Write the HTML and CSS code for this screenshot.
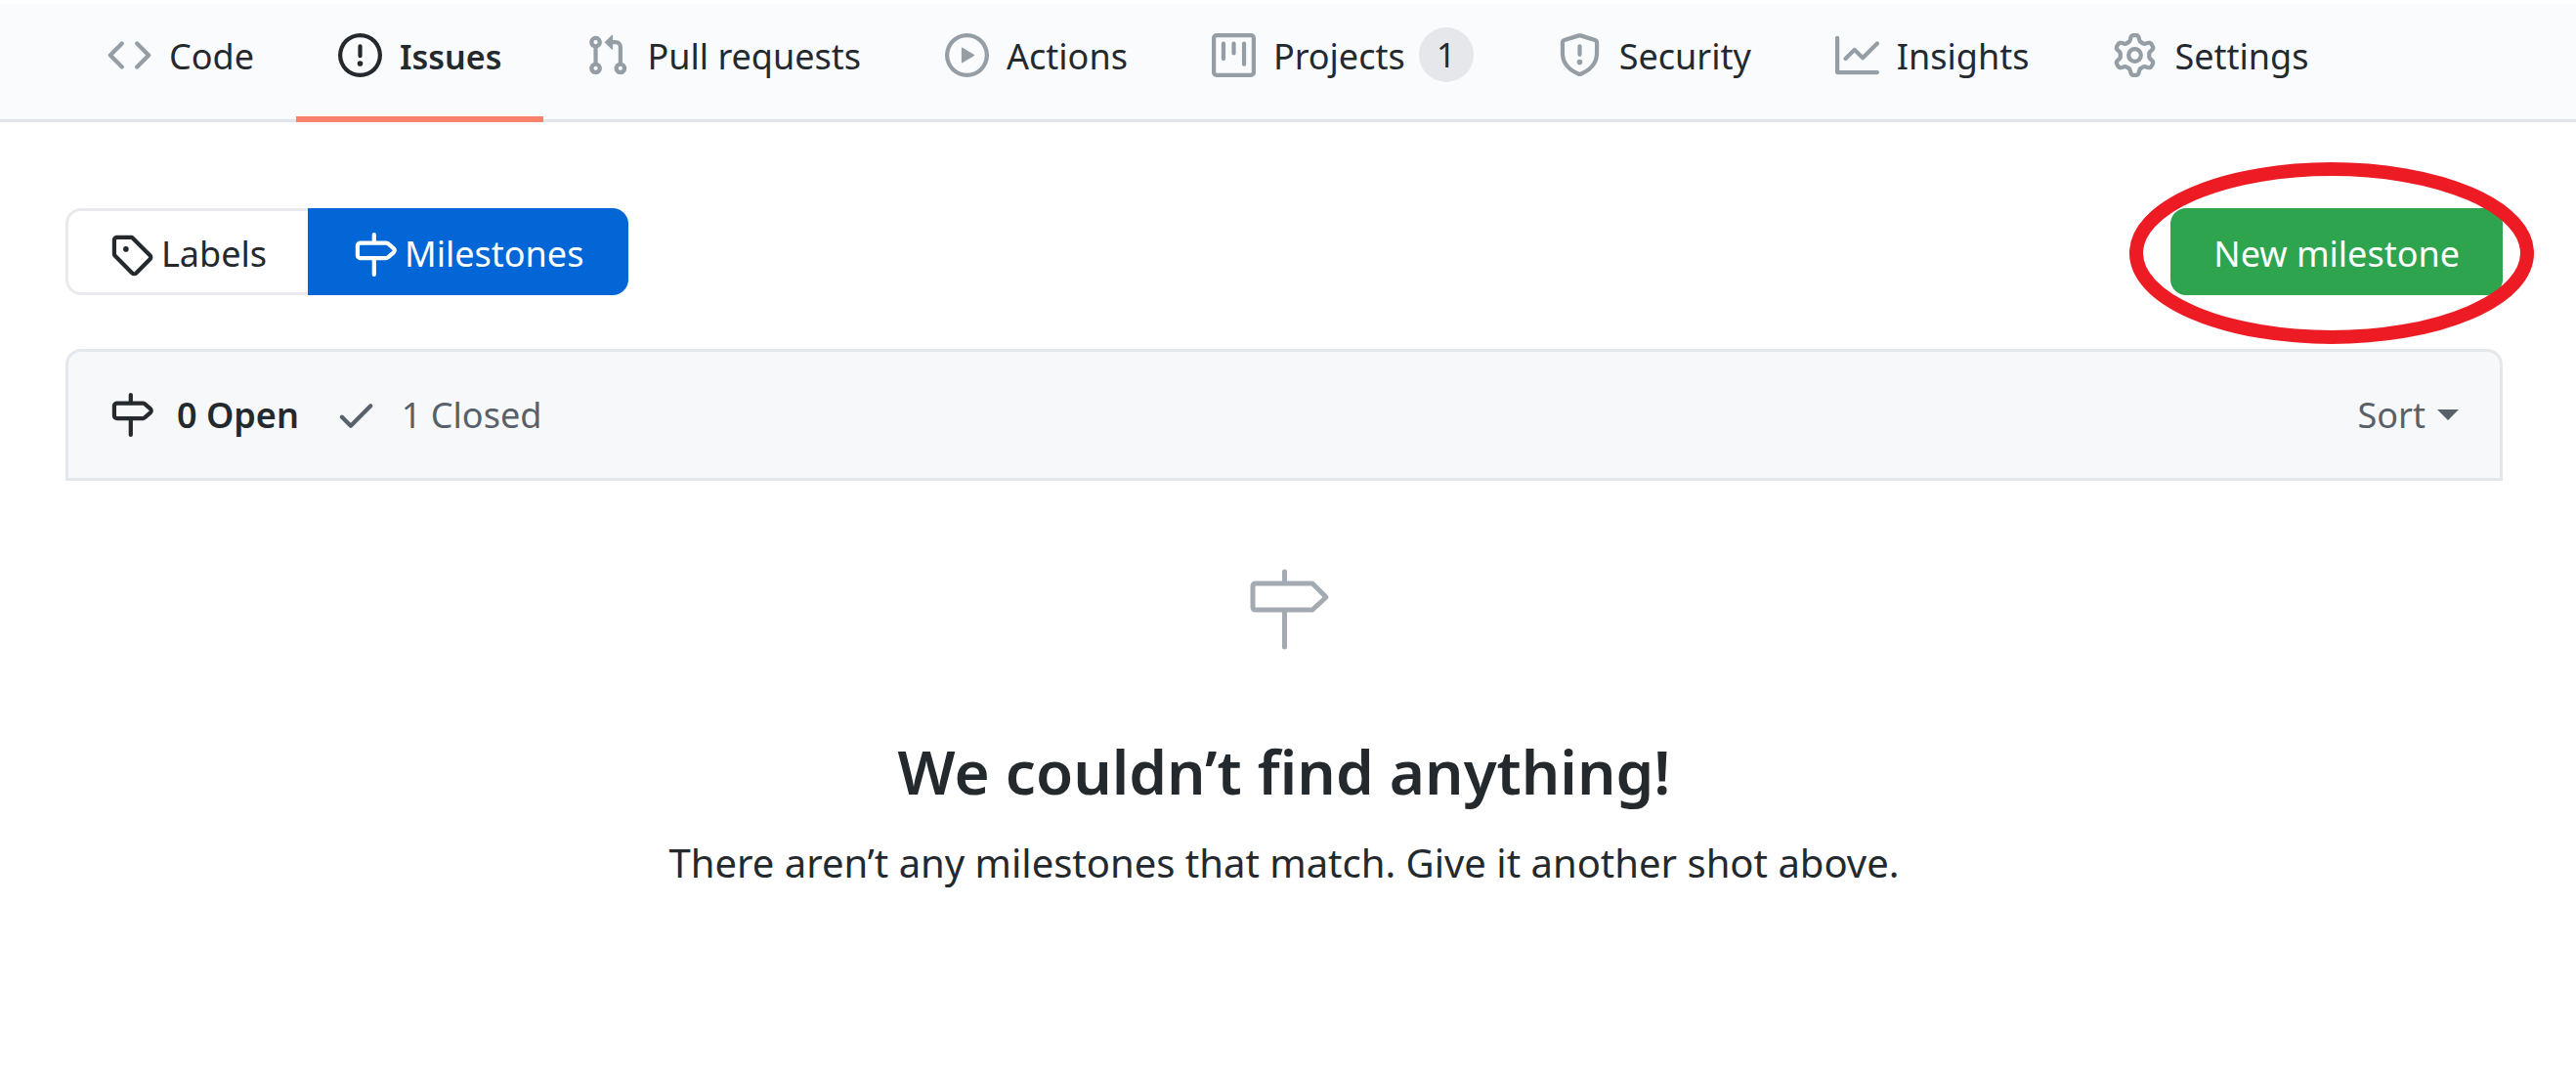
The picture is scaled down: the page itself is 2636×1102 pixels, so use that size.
FILE: index.html
```html
<!DOCTYPE html>
<html lang="en">
<head>
<meta charset="utf-8">
<title>Milestones</title>
<link rel="stylesheet" href="styles.css">
</head>
<body>
<svg class="sprite" aria-hidden="true">
  <symbol id="milestone" viewBox="0 0 16 16"><path d="M7.75 0a.75.75 0 01.75.75V3h3.634c.414 0 .814.147 1.13.414l2.07 1.75a1.75 1.75 0 010 2.672l-2.07 1.75a1.75 1.75 0 01-1.13.414H8.5v5.25a.75.75 0 11-1.5 0V10H2.75A1.75 1.75 0 011 8.25v-3.5C1 3.784 1.784 3 2.75 3H7V.75A.75.75 0 017.75 0zm0 8.5h4.384a.25.25 0 00.161-.06l2.07-1.75a.25.25 0 000-.38l-2.07-1.75a.25.25 0 00-.161-.06H2.75a.25.25 0 00-.25.25v3.5c0 .138.112.25.25.25h5z"/></symbol>
</svg>
<nav class="tabs" aria-label="Repository">
  <a class="tab" href="#code"><svg class="icon" viewBox="0 0 16 16"><path d="M4.72 3.22a.75.75 0 011.06 1.06L2.06 8l3.72 3.72a.75.75 0 11-1.06 1.06L.47 8.53a.75.75 0 010-1.06l4.25-4.25zm6.56 0a.75.75 0 10-1.06 1.06L13.94 8l-3.72 3.72a.75.75 0 101.06 1.06l4.25-4.25a.75.75 0 000-1.06l-4.25-4.25z"/></svg><span class="label">Code</span></a>
  <a class="tab tab-current" href="#issues" aria-current="page"><svg class="icon" viewBox="0 0 16 16"><path fill-rule="evenodd" d="M8 1.5a6.5 6.5 0 100 13 6.5 6.5 0 000-13zM0 8a8 8 0 1116 0A8 8 0 010 8zm9 3a1 1 0 11-2 0 1 1 0 012 0zm-.25-6.25a.75.75 0 00-1.5 0v3.5a.75.75 0 001.5 0v-3.5z"/></svg><span class="label">Issues</span></a>
  <a class="tab" href="#pulls"><svg class="icon" viewBox="0 0 16 16"><path fill-rule="evenodd" d="M7.177 3.073L9.573.677A.25.25 0 0110 .854v4.792a.25.25 0 01-.427.177L7.177 3.427a.25.25 0 010-.354zM3.75 2.5a.75.75 0 100 1.5.75.75 0 000-1.5zm-2.25.75a2.25 2.25 0 113 2.122v5.256a2.251 2.251 0 11-1.5 0V5.372A2.25 2.25 0 011.5 3.25zM11 2.5h-1V4h1a1 1 0 011 1v5.628a2.251 2.251 0 101.5 0V5A2.5 2.5 0 0011 2.5zm1 10.25a.75.75 0 111.5 0 .75.75 0 01-1.5 0zM3.75 12a.75.75 0 100 1.5.75.75 0 000-1.5z"/></svg><span class="label">Pull requests</span></a>
  <a class="tab" href="#actions"><svg class="icon" viewBox="0 0 16 16"><path fill-rule="evenodd" d="M1.5 8a6.5 6.5 0 1113 0 6.5 6.5 0 01-13 0zM8 0a8 8 0 100 16A8 8 0 008 0zM6.379 5.227A.25.25 0 006 5.442v5.117a.25.25 0 00.379.214l4.264-2.559a.25.25 0 000-.428L6.379 5.227z"/></svg><span class="label">Actions</span></a>
  <a class="tab" href="#projects"><svg class="icon" viewBox="0 0 16 16"><path fill-rule="evenodd" d="M1.75 0A1.75 1.75 0 000 1.75v12.5C0 15.216.784 16 1.75 16h12.5A1.75 1.75 0 0016 14.25V1.75A1.75 1.75 0 0014.25 0H1.75zM1.5 1.75a.25.25 0 01.25-.25h12.5a.25.25 0 01.25.25v12.5a.25.25 0 01-.25.25H1.75a.25.25 0 01-.25-.25V1.75zM11.75 3a.75.75 0 00-.75.75v7.5a.75.75 0 001.5 0v-7.5a.75.75 0 00-.75-.75zm-8.25.75a.75.75 0 011.5 0v5.5a.75.75 0 01-1.5 0v-5.5zM8 3a.75.75 0 00-.75.75v3.5a.75.75 0 001.5 0v-3.5A.75.75 0 008 3z"/></svg><span class="label">Projects</span><span class="count">1</span></a>
  <a class="tab" href="#security"><svg class="icon" viewBox="0 0 16 16"><path fill-rule="evenodd" d="M7.467.133a1.75 1.75 0 011.066 0l5.25 1.68A1.75 1.75 0 0115 3.48V7c0 1.566-.32 3.182-1.303 4.682-.983 1.498-2.585 2.813-5.032 3.855a1.7 1.7 0 01-1.33 0c-2.447-1.042-4.049-2.357-5.032-3.855C1.32 10.182 1 8.566 1 7V3.48a1.75 1.75 0 011.217-1.667l5.25-1.68zm.61 1.429a.25.25 0 00-.153 0l-5.25 1.68a.25.25 0 00-.174.238V7c0 1.358.275 2.666 1.057 3.86.784 1.194 2.121 2.34 4.366 3.297a.2.2 0 00.154 0c2.245-.956 3.582-2.104 4.366-3.298C13.225 9.666 13.5 8.36 13.5 7V3.48a.25.25 0 00-.174-.237l-5.25-1.68zM9 10.5a1 1 0 11-2 0 1 1 0 012 0zm-.25-5.75a.75.75 0 10-1.5 0v3a.75.75 0 001.5 0v-3z"/></svg><span class="label">Security</span></a>
  <a class="tab" href="#insights"><svg class="icon" viewBox="0 0 16 16"><path fill-rule="evenodd" d="M1.5 1.75a.75.75 0 00-1.5 0v12.5c0 .414.336.75.75.75h14.5a.75.75 0 000-1.5H1.5V1.75zm14.28 2.53a.75.75 0 00-1.06-1.06L10 7.94 7.53 5.47a.75.75 0 00-1.06 0L3.22 8.72a.75.75 0 001.06 1.06L7 7.06l2.47 2.47a.75.75 0 001.06 0l5.25-5.25z"/></svg><span class="label">Insights</span></a>
  <a class="tab" href="#settings"><svg class="icon" viewBox="0 0 16 16"><path fill-rule="evenodd" d="M7.429 1.525a6.593 6.593 0 011.142 0c.036.003.108.036.137.146l.289 1.105c.147.56.55.967.997 1.189.174.086.341.183.501.29.417.278.97.423 1.53.27l1.102-.303c.11-.03.175.016.195.046.219.31.41.641.573.989.014.031.022.11-.059.19l-.815.806c-.411.406-.562.957-.53 1.456a4.588 4.588 0 010 .582c-.032.499.119 1.05.53 1.456l.815.806c.08.08.073.159.059.19a6.494 6.494 0 01-.573.99c-.02.029-.086.074-.195.045l-1.103-.303c-.559-.153-1.112-.008-1.529.27-.16.107-.327.204-.5.29-.449.222-.851.628-.998 1.189l-.289 1.105c-.029.11-.101.143-.137.146a6.613 6.613 0 01-1.142 0c-.036-.003-.108-.037-.137-.146l-.289-1.105c-.147-.56-.55-.967-.997-1.189a4.502 4.502 0 01-.501-.29c-.417-.278-.97-.423-1.53-.27l-1.102.303c-.11.03-.175-.016-.195-.046a6.492 6.492 0 01-.573-.989c-.014-.031-.022-.11.059-.19l.815-.806c.411-.406.562-.957.53-1.456a4.587 4.587 0 010-.582c.032-.499-.119-1.05-.53-1.456l-.815-.806c-.08-.08-.073-.159-.059-.19a6.44 6.44 0 01.573-.99c.02-.029.086-.075.195-.045l1.103.303c.559.153 1.112.008 1.529-.27.16-.107.327-.204.5-.29.449-.222.851-.628.998-1.189l.289-1.105c.029-.11.101-.143.137-.146zM8 0c-.236 0-.47.01-.701.03-.743.065-1.29.615-1.458 1.261l-.29 1.106c-.017.066-.078.158-.211.224a5.994 5.994 0 00-.668.386c-.123.082-.233.09-.3.071L3.27 2.776c-.644-.177-1.392.02-1.82.63a7.977 7.977 0 00-.704 1.217c-.315.675-.111 1.422.363 1.891l.815.806c.05.048.098.147.088.294a6.084 6.084 0 000 .772c.01.147-.038.246-.088.294l-.815.806c-.474.469-.678 1.216-.363 1.891.2.428.436.835.704 1.218.428.609 1.176.806 1.82.63l1.103-.303c.066-.019.176-.011.299.071.213.143.436.272.668.386.133.066.194.158.212.224l.289 1.106c.169.646.715 1.196 1.458 1.26a8.094 8.094 0 001.402 0c.743-.064 1.29-.614 1.458-1.26l.29-1.106c.017-.066.078-.158.211-.224a5.98 5.98 0 00.668-.386c.123-.082.233-.09.3-.071l1.102.302c.644.177 1.392-.02 1.82-.63.268-.382.505-.789.704-1.217.315-.675.111-1.422-.364-1.891l-.814-.806c-.05-.048-.098-.147-.088-.294a6.1 6.1 0 000-.772c-.01-.147.039-.246.088-.294l.814-.806c.475-.469.679-1.216.364-1.891a7.992 7.992 0 00-.704-1.218c-.428-.609-1.176-.806-1.82-.63l-1.103.303c-.066.019-.176.011-.299-.071a5.991 5.991 0 00-.668-.386c-.133-.066-.194-.158-.212-.224L10.16 1.29C9.99.645 9.444.095 8.701.031A8.094 8.094 0 008 0zm1.5 8a1.5 1.5 0 11-3 0 1.5 1.5 0 013 0zM11 8a3 3 0 11-6 0 3 3 0 016 0z"/></svg><span class="label">Settings</span></a>
</nav>
<main class="page">
  <div class="toolbar">
    <div class="subnav">
      <a class="subnav-item" href="#labels"><svg class="icon icon-low" viewBox="0 0 16 16"><path fill-rule="evenodd" d="M2.5 7.775V2.75a.25.25 0 01.25-.25h5.025a.25.25 0 01.177.073l6.25 6.25a.25.25 0 010 .354l-5.025 5.025a.25.25 0 01-.354 0l-6.25-6.25a.25.25 0 01-.073-.177zm-1.5 0V2.75C1 1.784 1.784 1 2.75 1h5.025c.464 0 .91.184 1.238.513l6.25 6.25a1.75 1.75 0 010 2.474l-5.026 5.026a1.75 1.75 0 01-2.474 0l-6.25-6.25A1.75 1.75 0 011 7.775zM6 5a1 1 0 100 2 1 1 0 000-2z"/></svg><span class="label">Labels</span></a>
      <a class="subnav-item subnav-current" href="#milestones" aria-current="page"><svg class="icon icon-low"><use href="#milestone"/></svg><span class="label">Milestones</span></a>
    </div>
    <div class="create">
      <button class="create-button" type="button">New milestone</button>
      <svg class="highlight" viewBox="0 0 414 188" aria-hidden="true"><ellipse cx="207" cy="94" rx="200" ry="86"/></svg>
    </div>
  </div>
  <div class="list-header">
    <a class="filter filter-current" href="#open"><svg class="icon"><use href="#milestone"/></svg><span>0 Open</span></a>
    <a class="filter" href="#closed"><svg class="icon" viewBox="0 0 16 16"><path d="M13.78 4.22a.75.75 0 010 1.06l-7.25 7.25a.75.75 0 01-1.06 0L2.22 9.28a.75.75 0 011.06-1.06L6 10.94l6.72-6.72a.75.75 0 011.06 0z"/></svg><span>1 Closed</span></a>
    <button class="sort" type="button">Sort<span class="caret"></span></button>
  </div>
  <section class="blank">
    <svg class="blank-icon" viewBox="0 0 87 87" aria-hidden="true"><path d="M43.5 5v12M43.5 44v38M14 17h58l14 14-14 13H14q-3 0-3-3V20q0-3 3-3z"/></svg>
    <h1 class="blank-title">We couldn’t find anything!</h1>
    <p class="blank-text">There aren’t any milestones that match. Give it another shot above.</p>
  </section>
</main>
</body>
</html>
```
FILE: styles.css
```css
* { box-sizing: border-box; }

body {
  margin: 0;
  background: #fff;
  color: #24292e;
  font-family: "Noto Sans", "Open Sans", sans-serif;
  font-size: 36px;
  line-height: 56px;
}

a { color: inherit; text-decoration: none; }
button { font: inherit; border: 0; cursor: pointer; }
.sprite { position: absolute; width: 0; height: 0; }
.icon { flex: none; width: 45px; height: 45px; fill: currentColor; }
.label { padding-top: 4px; }

.tabs {
  display: flex;
  margin-top: 4px;
  padding-left: 67px;
  background: #fafbfd;
  border-bottom: 3px solid #e1e4e8;
}
.tab {
  display: flex;
  align-items: center;
  gap: 18px;
  margin-bottom: -3px;
  padding: 22px 43px 33px;
  border-bottom: 6px solid transparent;
  white-space: nowrap;
}
.tab .icon { color: #959da5; }
.tab-current { border-bottom-color: #f9826c; font-size: 34px; font-weight: 600; }
.tab-current .icon { color: #24292e; }
.count {
  width: 56px;
  height: 56px;
  margin-left: -4px;
  border-radius: 50%;
  background: #e6e7ea;
  font-size: 34px;
  text-align: center;
}

.page { padding: 88px 75px 0 67px; }
.toolbar { display: flex; justify-content: space-between; }
.subnav { display: flex; }
.subnav-item {
  display: flex;
  align-items: center;
  gap: 8px;
  height: 89px;
  padding: 0 42px;
  border: 3px solid #e8eaed;
  border-right: 0;
  border-radius: 16px 0 0 16px;
}
.subnav-current {
  padding: 0 46px;
  border: 0;
  border-radius: 0 16px 16px 0;
  background: #0366d6;
  color: #fff;
}
.icon-low { margin-top: 6px; }

.create { position: relative; }
.create-button {
  height: 89px;
  padding: 4px 44px 0;
  border-radius: 16px;
  background: #2ea44f;
  color: #fff;
}
.highlight {
  position: absolute;
  top: -48px;
  right: -32px;
  width: 414px;
  height: 188px;
  fill: none;
  stroke: #ed1c24;
  stroke-width: 14px;
  pointer-events: none;
}

.list-header {
  display: flex;
  align-items: center;
  gap: 36px;
  height: 135px;
  margin-top: 55px;
  padding: 0 42px;
  border: 3px solid #e4e8ec;
  border-radius: 16px 16px 0 0;
  background: #f6f8fa;
  color: #586069;
}
.filter { display: flex; align-items: center; gap: 24px; }
.filter-current { color: #24292e; font-weight: 600; }
.sort {
  display: flex;
  align-items: center;
  gap: 12px;
  margin-left: auto;
  padding: 0;
  background: none;
  color: inherit;
}
.caret {
  border: 11px solid transparent;
  border-top-color: #586069;
  border-bottom: 0;
}

.blank { padding-top: 88px; text-align: center; }
.blank-icon {
  display: block;
  width: 87px;
  height: 87px;
  margin: 0 auto;
  overflow: visible;
  fill: none;
  stroke: #a3aab1;
  stroke-width: 5;
  stroke-linecap: round;
  stroke-linejoin: round;
}
.blank-title { margin: 74px 0 0; font-size: 62px; font-weight: 600; line-height: 96px; }
.blank-text { margin: 18px 0 0; font-size: 40px; }
```
